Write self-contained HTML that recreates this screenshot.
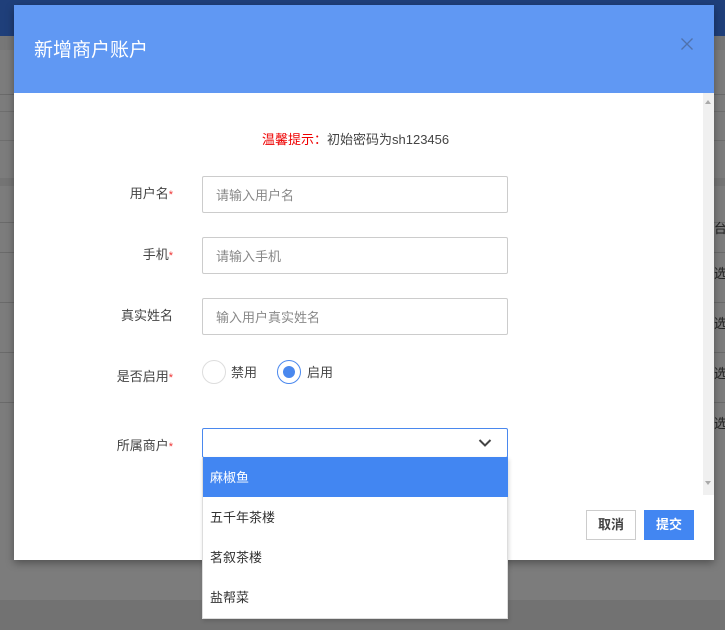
<!DOCTYPE html>
<html><head><meta charset="utf-8"><style>
*{margin:0;padding:0;box-sizing:border-box}
body{width:725px;height:630px;overflow:hidden;background:#7c7c7c;font-family:"Liberation Sans","Noto Sans CJK SC",sans-serif;position:relative}
.abs{position:absolute}
.hl{position:absolute;left:0;width:725px;height:1px;background:#6a6a6a}
.modal{position:absolute;left:14px;top:5px;width:700px;height:555px;background:#fff;box-shadow:0 3px 8px rgba(0,0,0,.35)}
.hdr{position:absolute;left:0;top:0;width:700px;height:88px;background:#6098f3}
.hdr h1{position:absolute;left:20px;top:30px;font-size:19px;font-weight:normal;color:#fff}
.lbl{position:absolute;font-size:13px;color:#444;text-align:right;width:80px}
.lbl i{color:#e33;font-style:normal;font-size:11px}
.inp{position:absolute;left:188px;width:306px;height:37px;border:1px solid #ccc;border-radius:2px;font-size:13px;color:#888;padding:8px 13px}
.radio{position:absolute;width:24px;height:24px;border-radius:50%;border:1px solid #ddd;background:#fff}
.opt{position:absolute;left:0;width:305px;height:40px;font-size:13px;color:#333;padding:10px 7px}
</style></head><body>
<div class="abs" style="left:0;top:0;width:725px;height:36px;background:#1f3f7a"></div>
<div class="abs" style="left:0;top:36px;width:725px;height:14px;background:#777"></div>
<div class="hl" style="top:94px"></div>
<div class="hl" style="top:111px;background:#6e6e6e"></div>
<div class="hl" style="top:140px;background:#6e6e6e"></div>
<div class="abs" style="left:0;top:178px;width:725px;height:8px;background:#747474"></div>
<div class="hl" style="top:222px"></div>
<div class="hl" style="top:252px"></div>
<div class="hl" style="top:302px"></div>
<div class="hl" style="top:352px"></div>
<div class="hl" style="top:402px"></div>
<div class="abs" style="left:0;top:600px;width:725px;height:30px;background:#727272"></div>
<div class="abs" style="left:714px;top:218px;font-size:13px;color:#222">台</div>
<div class="abs" style="left:714px;top:263px;font-size:13px;color:#222">选</div>
<div class="abs" style="left:714px;top:313px;font-size:13px;color:#222">选</div>
<div class="abs" style="left:714px;top:363px;font-size:13px;color:#222">选</div>
<div class="abs" style="left:714px;top:413px;font-size:13px;color:#222">选</div>
<div class="modal">
 <div class="hdr"><h1>新增商户账户</h1>
  <svg class="abs" style="left:667px;top:33px" width="12" height="12"><path d="M0.5 0.5 L11.5 11.5 M11.5 0.5 L0.5 11.5" stroke="#4f72ac" stroke-width="1.3"/></svg>
 </div>
 <div class="abs" style="left:689px;top:88px;width:11px;height:402px;background:#f0f0f0"></div>
 <div class="abs" style="left:691px;top:95px;border:3.5px solid transparent;border-bottom:4px solid #aaa;border-top:0"></div>
 <div class="abs" style="left:691px;top:476px;border:3.5px solid transparent;border-top:4px solid #aaa;border-bottom:0"></div>
 <div class="abs" style="left:248px;top:124px;font-size:13px;color:#444"><span style="color:#e00">温馨提示：</span>初始密码为sh123456</div>
 <div class="lbl" style="left:79px;top:178px">用户名<i>*</i></div>
 <div class="inp" style="top:171px">请输入用户名</div>
 <div class="lbl" style="left:79px;top:239px">手机<i>*</i></div>
 <div class="inp" style="top:232px">请输入手机</div>
 <div class="lbl" style="left:79px;top:300px">真实姓名</div>
 <div class="inp" style="top:293px">输入用户真实姓名</div>
 <div class="lbl" style="left:79px;top:361px">是否启用<i>*</i></div>
 <div class="radio" style="left:188px;top:355px"></div>
 <div class="abs" style="left:217px;top:357px;font-size:13px;color:#444">禁用</div>
 <div class="radio" style="left:263px;top:355px;border:1px solid #4a88ee"><div style="position:absolute;left:5px;top:5px;width:12px;height:12px;border-radius:50%;background:#4a88ee"></div></div>
 <div class="abs" style="left:293px;top:357px;font-size:13px;color:#444">启用</div>
 <div class="lbl" style="left:79px;top:430px">所属商户<i>*</i></div>
 <div class="abs" style="left:188px;top:423px;width:306px;height:30px;border:1px solid #4a88ee;border-radius:2px;background:#fff">
  <svg class="abs" style="left:275px;top:9px" width="14" height="10"><path d="M1.5 2 L7 7.5 L12.5 2" stroke="#444" stroke-width="2" fill="none"/></svg>
 </div>
 <div class="abs" style="left:188px;top:452px;width:306px;height:162px;background:#fff;border:1px solid #ddd;border-top:0;box-shadow:1px 2px 4px rgba(0,0,0,.15)">
  <div class="opt" style="top:0;background:#4286f2;color:#fff">麻椒鱼</div>
  <div class="opt" style="top:40px">五千年茶楼</div>
  <div class="opt" style="top:80px">茗叙茶楼</div>
  <div class="opt" style="top:120px">盐帮菜</div>
 </div>
 <div class="abs" style="left:572px;top:505px;width:50px;height:30px;border:1px solid #ccc;font-size:13px;font-weight:bold;color:#444;text-align:center;line-height:28px">取消</div>
 <div class="abs" style="left:630px;top:505px;width:50px;height:30px;background:#4286f2;font-size:13px;font-weight:bold;color:#fff;text-align:center;line-height:30px">提交</div>
</div>
</body></html>
